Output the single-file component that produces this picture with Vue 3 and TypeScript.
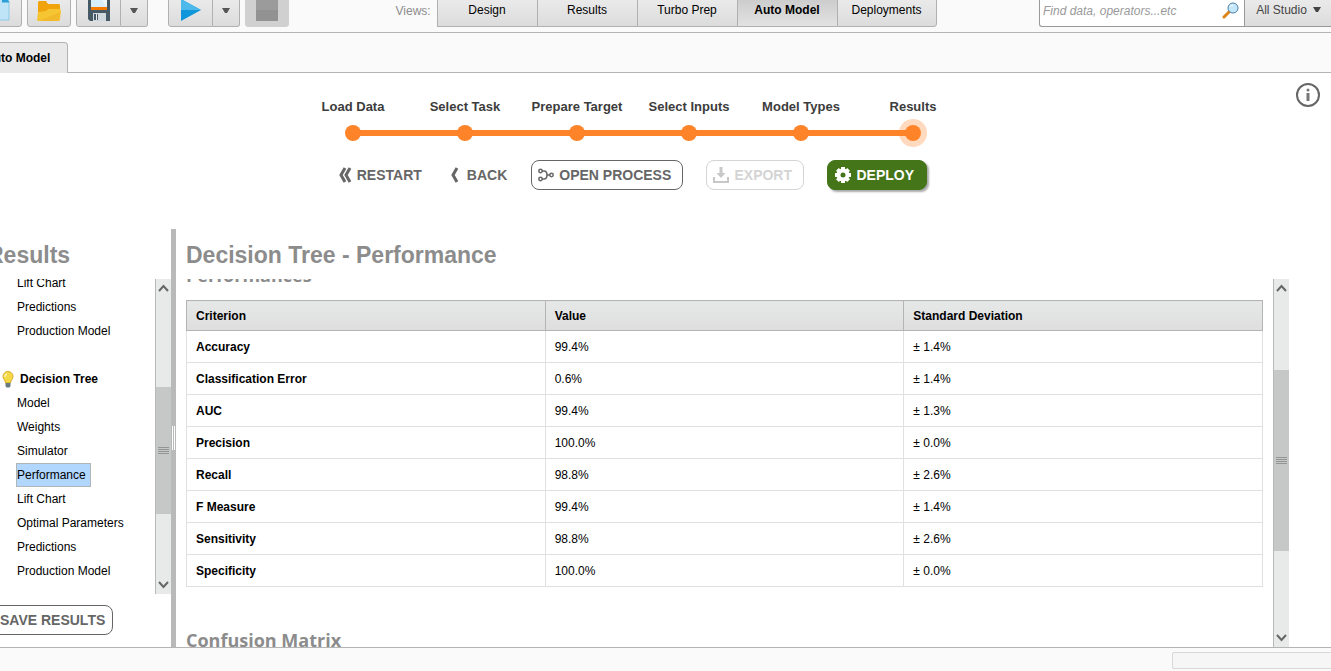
<script setup lang="ts">
import { ref } from 'vue'

interface Row {
  criterion: string
  value: string
  deviation: string
}

const views: string[] = ['Design', 'Results', 'Turbo Prep', 'Auto Model', 'Deployments']
const activeView = ref('Auto Model')

const steps: string[] = ['Load Data', 'Select Task', 'Prepare Target', 'Select Inputs', 'Model Types', 'Results']
const currentStep = 'Results'

const previousItems: string[] = ['Lift Chart', 'Predictions', 'Production Model']
const treeItems: string[] = [
  'Model',
  'Weights',
  'Simulator',
  'Performance',
  'Lift Chart',
  'Optimal Parameters',
  'Predictions',
  'Production Model',
]
const selectedItem = ref('Performance')
const query = ref('')

const rows: Row[] = [
  { criterion: 'Accuracy', value: '99.4%', deviation: '± 1.4%' },
  { criterion: 'Classification Error', value: '0.6%', deviation: '± 1.4%' },
  { criterion: 'AUC', value: '99.4%', deviation: '± 1.3%' },
  { criterion: 'Precision', value: '100.0%', deviation: '± 0.0%' },
  { criterion: 'Recall', value: '98.8%', deviation: '± 2.6%' },
  { criterion: 'F Measure', value: '99.4%', deviation: '± 1.4%' },
  { criterion: 'Sensitivity', value: '98.8%', deviation: '± 2.6%' },
  { criterion: 'Specificity', value: '100.0%', deviation: '± 0.0%' },
]
</script>

<template>
  <div class="app">
    <header class="toolbar">
      <div class="tools">
        <button class="tool" aria-label="New process">
          <svg width="20" height="34" viewBox="0 0 20 34">
            <path d="M0 5h12l7 9v19H0z" fill="#bfe4f7" stroke="#8ccbe8" />
            <path d="M12 5v10.500h7.500z" fill="#2a9fd8" />
          </svg>
        </button>
        <button class="tool" aria-label="Open process">
          <svg width="24" height="34" viewBox="0 0 24 34">
            <path d="M1 16V15l1-1h7l2 3h11l1 1v15H1z" fill="#f0a30a" />
            <path d="M0 33 1 25l8-1 2-2h12l1 1-1 10-1 1H1z" fill="#f6c532" />
            <path d="M2 34 23 25l-1 9z" fill="#f2b92a" />
          </svg>
        </button>
        <div class="split">
          <button class="tool" aria-label="Save process">
            <svg width="22" height="34" viewBox="0 0 22 34">
              <path d="M0 8h22v26H2l-2-2z" fill="#455a64" />
              <path d="M3 8h16v13H3z" fill="#d8effb" />
              <path d="M11 8h8v13z" fill="#eef8fd" />
              <path d="M3 20h16v3H3z" fill="#f57c00" />
              <path d="M5 26h13v8H5z" fill="#cfd8dc" />
              <path d="M6 27h4v6H6z" fill="#455a64" />
              <path d="M8 27h1v6H8z" fill="#eceff1" />
            </svg>
          </button>
          <button class="drop" aria-label="Save options">
            <svg width="8" height="6" viewBox="0 0 8 6"><path d="M0 0h8L5 5H3z" fill="#555" /></svg>
          </button>
        </div>
        <div class="split run">
          <button class="tool" aria-label="Run process">
            <svg width="20" height="34" viewBox="0 0 20 34">
              <path d="M0 12v22l20-11z" fill="#1296db" />
              <path d="M0 12v11h20z" fill="#4db8ea" />
            </svg>
          </button>
          <button class="drop" aria-label="Run options">
            <svg width="8" height="6" viewBox="0 0 8 6"><path d="M0 0h8L5 5H3z" fill="#555" /></svg>
          </button>
        </div>
        <button class="tool stop" aria-label="Stop process" disabled>
          <svg width="22" height="34" viewBox="0 0 22 34">
            <path d="M0 12h22v22H0z" fill="#929292" />
            <path d="M0 12h22v11H0z" fill="#9b9b9b" />
          </svg>
        </button>
      </div>

      <nav class="views" aria-label="Views">
        <span class="views-label">Views:</span>
        <button
          v-for="view in views"
          :key="view"
          class="view"
          :class="{ active: view === activeView }"
          @click="activeView = view"
        >
          {{ view }}
        </button>
      </nav>

      <div class="search">
        <label class="search-box">
          <input v-model="query" type="text" placeholder="Find data, operators...etc" aria-label="Search" />
          <svg width="18" height="18" viewBox="0 0 18 18">
            <path d="M2 16 8 10" stroke="#dd8418" stroke-width="3" stroke-linecap="round" />
            <circle cx="11" cy="7" r="5" fill="#c4e8fa" stroke="#4b7ea5" stroke-width="1" />
            <path d="M8 6a3 3 0 0 1 3-2" stroke="#fff" fill="none" />
          </svg>
        </label>
        <button class="scope">
          All Studio
          <svg width="8" height="6" viewBox="0 0 8 6"><path d="M0 0h8L5 5H3z" fill="#444" /></svg>
        </button>
      </div>
    </header>

    <div class="tabs">
      <button class="tab">Auto Model</button>
    </div>

    <section class="wizard">
      <div class="wizard-main">
        <ol class="steps">
          <li v-for="step in steps" :key="step" :class="{ current: step === currentStep }">
            <span>{{ step }}</span>
            <span class="track"><span class="dot"></span></span>
          </li>
        </ol>
        <div class="actions">
          <button class="plain restart">
            <svg width="13" height="16" viewBox="0 0 13 16">
              <path d="M6 1 2 8l4 7M11 1 7 8l4 7" fill="none" stroke="#666" stroke-width="3" />
            </svg>
            RESTART
          </button>
          <button class="plain back">
            <svg width="9" height="16" viewBox="0 0 9 16">
              <path d="M7 1 3 8l4 7" fill="none" stroke="#666" stroke-width="3" />
            </svg>
            BACK
          </button>
          <button class="boxed open">
            <svg width="16" height="14" viewBox="0 0 16 14" fill="none" stroke="#666">
              <circle cx="2.5" cy="3" r="1.7" stroke-width="1.5" />
              <circle cx="2.5" cy="11" r="1.7" stroke-width="1.5" />
              <circle cx="13.5" cy="7" r="1.7" stroke-width="1.5" />
              <path d="M4 3h2c2 0 3 2 3 4s-1 4-3 4H4M9 7h3" stroke-width="1.6" />
            </svg>
            OPEN PROCESS
          </button>
          <button class="boxed export" disabled>
            <svg width="16" height="16" viewBox="0 0 16 16">
              <path d="M6.500 0h3v6h3L8 11 3.500 6h3z" fill="#c8c8c8" />
              <path d="M1 10v5h14v-5" fill="none" stroke="#c8c8c8" stroke-width="2" />
            </svg>
            EXPORT
          </button>
          <button class="boxed deploy">
            <svg width="16" height="16" viewBox="0 0 16 16">
              <circle cx="8" cy="8" r="4.500" fill="none" stroke="#fff" stroke-width="4" />
              <g stroke="#fff" stroke-width="4">
                <path d="M8 0v3M8 13v3M0 8h3M13 8h3M2.400 2.400l2 2M11.600 11.600l2 2M2.400 13.600l2-2M11.600 4.400l2-2" />
              </g>
            </svg>
            DEPLOY
          </button>
        </div>
      </div>
      <div class="wizard-side">
        <button class="info" aria-label="Information">
          <svg width="24" height="24" viewBox="0 0 24 24">
            <circle cx="12" cy="12" r="11" fill="none" stroke="#666" stroke-width="2" />
            <circle cx="12" cy="7" r="1.500" fill="#777" />
            <path d="M12 10v8" stroke="#777" stroke-width="3" />
          </svg>
        </button>
      </div>
    </section>

    <main class="workspace">
      <aside class="sidebar">
        <h2 class="title">Results</h2>
        <div class="list-pane">
          <div class="list">
            <a v-for="item in previousItems" :key="item" href="#" class="item">{{ item }}</a>
            <div class="group">
              <svg width="12" height="17" viewBox="0 0 12 17">
                <path d="M1 5.500a5 5 0 0 1 10 0c0 3-2.500 3.500-2.500 6.500h-5C3.500 9 1 8.500 1 5.500z" fill="#f4d944" stroke="#d9a928" />
                <path d="M3.500 12h5v3l-1 1.500h-3l-1-1.500z" fill="#68797f" />
                <path d="M3 6a3 3 0 0 1 2-3" fill="none" stroke="#fff6b5" stroke-width="1.500" />
              </svg>
              Decision Tree
            </div>
            <a
              v-for="item in treeItems"
              :key="item"
              href="#"
              class="item"
              :class="{ selected: item === selectedItem }"
              @click.prevent="selectedItem = item"
            >{{ item }}</a>
          </div>
          <div class="scrollbar">
            <button aria-label="Scroll list up">
              <svg width="11" height="8" viewBox="0 0 11 8"><path d="m1 7 4.500-5L10 7" /></svg>
            </button>
            <div class="rail">
              <span class="space-list-top"></span>
              <span class="thumb thumb-list"></span>
              <span class="space-list-bottom"></span>
            </div>
            <button aria-label="Scroll list down">
              <svg width="11" height="8" viewBox="0 0 11 8"><path d="m1 1 4.500 5L10 1" /></svg>
            </button>
          </div>
        </div>
        <div class="save-row">
          <button class="boxed save">SAVE RESULTS</button>
        </div>
      </aside>

      <div class="divider"><span class="grip"></span></div>

      <section class="content">
        <h2 class="title">Decision Tree - Performance</h2>
        <div class="content-pane">
          <div class="report">
            <h3 class="first">Performances</h3>
            <table>
              <thead>
                <tr>
                  <th scope="col">Criterion</th>
                  <th scope="col">Value</th>
                  <th scope="col">Standard Deviation</th>
                </tr>
              </thead>
              <tbody>
                <tr v-for="row in rows" :key="row.criterion">
                  <th scope="row">{{ row.criterion }}</th>
                  <td>{{ row.value }}</td>
                  <td>{{ row.deviation }}</td>
                </tr>
              </tbody>
            </table>
            <h3>Confusion Matrix</h3>
          </div>
          <div class="scrollbar">
            <button aria-label="Scroll report up">
              <svg width="11" height="8" viewBox="0 0 11 8"><path d="m1 7 4.500-5L10 7" /></svg>
            </button>
            <div class="rail">
              <span class="space-report-top"></span>
              <span class="thumb thumb-report"></span>
              <span class="space-report-bottom"></span>
            </div>
            <button aria-label="Scroll report down">
              <svg width="11" height="8" viewBox="0 0 11 8"><path d="m1 1 4.500 5L10 1" /></svg>
            </button>
          </div>
        </div>
      </section>
    </main>

    <footer class="status"><div class="progress"></div></footer>
  </div>
</template>

<style>
body {
  margin: 0;
  background: #fff;
}
</style>

<style scoped>
.app {
  display: flex;
  flex-direction: column;
  height: 100vh;
  overflow: hidden;
  font-family: "Liberation Sans", Arial, sans-serif;
  font-size: 12px;
  color: #000;
}
.app * {
  box-sizing: border-box;
}
button,
input {
  font: inherit;
  color: inherit;
  margin: 0;
  padding: 0;
  border: 0;
  background: none;
}
svg {
  flex: none;
  display: block;
}

/* toolbar */
.toolbar {
  display: flex;
  flex: none;
  justify-content: space-between;
  align-items: flex-end;
  height: 33px;
  padding-bottom: 5px;
  overflow: hidden;
  background: #fafafa;
  border-bottom: 1px solid #b4b4b4;
}
.tools {
  display: flex;
  gap: 5px;
  margin-left: -22px;
}
.tool,
.drop {
  display: flex;
  align-items: flex-end;
  justify-content: center;
  width: 44px;
  height: 44px;
  padding-bottom: 5px;
  border: 1px solid #b0b0b0;
  border-radius: 3px;
  background: linear-gradient(#f2f2f2, #dcdcdc);
}
.split {
  display: flex;
}
.split .tool {
  width: 45px;
  border-radius: 3px 0 0 3px;
}
.drop {
  width: 27px;
  padding-bottom: 12px;
  border-left: 0;
  border-radius: 0 3px 3px 0;
}
.run {
  margin-left: 15px;
}
.tool.stop {
  border-color: #d0d0d0;
  background: #d0d0d0;
}
.views {
  display: flex;
  padding-left: 4px;
}
.views-label {
  align-self: flex-end;
  width: 41px;
  padding-bottom: 8px;
  line-height: 16px;
  color: #8c8c8c;
}
.view {
  width: 100px;
  height: 44px;
  padding-top: 9px;
  border: solid #b0b0b0;
  border-width: 1px 0 1px 1px;
  background: linear-gradient(#f2f2f2, #dcdcdc);
}
.view:last-child {
  border-right-width: 1px;
  border-bottom-right-radius: 3px;
}
.view.active {
  font-weight: bold;
  background: linear-gradient(#c0c0c0, #e2e2e2);
}
.search {
  display: flex;
  margin-right: -2px;
}
.search-box {
  display: flex;
  align-items: flex-end;
  width: 205px;
  height: 44px;
  padding: 0 4px 7px 3px;
  border: 1px solid #999;
  border-right: 0;
  border-radius: 3px 0 0 3px;
  background: #fff;
}
.search-box input {
  flex: 1;
  min-width: 0;
  height: 16px;
  font-style: italic;
  outline: none;
}
.search-box input::placeholder {
  color: #999;
  opacity: 1;
}
.scope {
  display: flex;
  gap: 6px;
  align-items: center;
  justify-content: center;
  width: 89px;
  height: 44px;
  padding-top: 9px;
  border: 1px solid #999;
  background: linear-gradient(#f2f2f2, #dcdcdc);
  color: #444;
}

/* document tabs */
.tabs {
  display: flex;
  flex: none;
  align-items: flex-end;
  height: 40px;
  background: #fafafa;
  border-bottom: 1px solid #b4b4b4;
}
.tab {
  height: 31px;
  margin: 0 0 -1px -26px;
  padding: 0 17px 0 10px;
  border: 1px solid #b4b4b4;
  border-bottom: 0;
  border-radius: 4px 4px 0 0;
  background: #e9e9e9;
  font-weight: bold;
}

/* wizard header */
.wizard {
  display: flex;
  flex: none;
  height: 156px;
}
.wizard-main {
  display: flex;
  flex: 1;
  flex-direction: column;
  align-items: center;
  padding-top: 26px;
}
.wizard-side {
  display: flex;
  justify-content: flex-end;
  align-items: flex-start;
  width: 65px;
  padding: 10px 11px 0 0;
}
.steps {
  display: flex;
  margin: 0;
  padding: 0;
  list-style: none;
  font-size: 13px;
  font-weight: bold;
  line-height: 16px;
  color: #3c3c3c;
}
.steps li {
  width: 112px;
  text-align: center;
}
.track {
  display: flex;
  justify-content: center;
  align-items: center;
  height: 28px;
  margin-top: 4px;
  background: linear-gradient(#ff8329, #ff8329) center / 100% 6px no-repeat;
}
.steps li:first-child .track {
  background-size: 50% 6px;
  background-position: right center;
}
.steps li:last-child .track {
  background-size: 50% 6px;
  background-position: left center;
}
.dot {
  width: 16px;
  height: 16px;
  border-radius: 50%;
  background: #ff8329;
}
.current .dot {
  box-shadow: 0 0 0 6px rgba(255, 131, 41, 0.3);
}
.actions {
  display: flex;
  align-items: center;
  margin-top: 13px;
  font-size: 14px;
  font-weight: bold;
  color: #666;
}
.plain,
.boxed {
  display: flex;
  align-items: center;
  height: 30px;
  gap: 5px;
  white-space: nowrap;
}
.boxed {
  justify-content: center;
  border: 1px solid #666;
  border-radius: 8px;
}
.restart {
  margin-right: 28px;
}
.back {
  gap: 8px;
  margin-right: 24px;
}
.open {
  width: 152px;
  margin-right: 23px;
  padding-right: 5px;
}
.export {
  width: 98px;
  margin-right: 23px;
  padding-right: 5px;
  border-color: #d4d4d4;
  color: #d4d4d4;
}
.deploy {
  width: 100px;
  padding-right: 5px;
  border-color: #447518;
  background: #447518;
  color: #fff;
  box-shadow: 2px 2px 2px #aaa;
}

/* workspace */
.workspace {
  display: flex;
  flex: 1;
  min-height: 0;
}
.sidebar {
  display: flex;
  flex: none;
  flex-direction: column;
  width: 171px;
}
.title {
  flex: none;
  height: 50px;
  margin: 0;
  line-height: 52px;
  font-size: 23px;
  color: #8c8c8c;
  white-space: nowrap;
}
.sidebar .title {
  margin-left: -13px;
}
.list-pane {
  display: flex;
  flex: 1;
  min-height: 0;
}
.list {
  display: flex;
  flex: 1;
  flex-direction: column;
  align-items: flex-start;
  justify-content: flex-end;
  padding: 0 0 11px 2px;
  overflow: hidden;
}
.item {
  flex: none;
  height: 24px;
  margin-left: 14px;
  padding: 0 4px 0 0;
  border: 1px solid transparent;
  line-height: 22px;
  color: #000;
  text-decoration: none;
}
.item.selected {
  background: #b1d7ff;
  border-color: #b0b5b8;
}
.group {
  display: flex;
  flex: none;
  gap: 6px;
  align-items: center;
  height: 24px;
  margin-top: 24px;
  font-weight: bold;
}
.scrollbar {
  display: flex;
  flex: none;
  flex-direction: column;
  width: 16px;
  border-left: 1px solid #b8b8b8;
  background: #e8eaea;
}
.scrollbar button {
  display: flex;
  align-items: center;
  justify-content: center;
  height: 18px;
}
.scrollbar path {
  fill: none;
  stroke: #666;
  stroke-width: 2;
}
.rail {
  display: flex;
  flex: 1;
  flex-direction: column;
}
.thumb {
  display: flex;
  align-items: center;
  justify-content: center;
  background: #c6c8c7;
}
.thumb::before {
  content: "";
  width: 11px;
  height: 7px;
  background: repeating-linear-gradient(#929594 0 1px, transparent 1px 2px);
}
.space-list-top {
  flex: 90;
}
.thumb-list {
  flex: 127;
}
.space-list-bottom {
  flex: 62;
}
.space-report-top {
  flex: 73;
}
.thumb-report {
  flex: 181;
}
.space-report-bottom {
  flex: 78;
}
.save-row {
  display: flex;
  flex: none;
  align-items: flex-start;
  height: 53px;
  padding-top: 11px;
}
.save {
  margin-left: -10px;
  padding: 0 7px 0 9px;
  font-size: 14px;
  font-weight: bold;
  color: #666;
}
.divider {
  display: flex;
  flex: none;
  align-items: center;
  justify-content: center;
  width: 5px;
  background: #b9b9b9;
}
.grip {
  width: 3px;
  height: 24px;
  border: solid #fff;
  border-width: 0 1px;
}

/* report */
.content {
  display: flex;
  flex: 1;
  flex-direction: column;
  min-width: 0;
  padding: 0 42px 0 10px;
}
.content-pane {
  display: flex;
  flex: 1;
  gap: 10px;
  min-height: 0;
}
.report {
  flex: 1;
  min-width: 0;
  overflow: hidden;
}
h3 {
  margin: 39px 0 0;
  font-family: "Open Sans", sans-serif;
  font-size: 18px;
  font-weight: bold;
  line-height: 28px;
  color: #8c8c8c;
}
h3.first {
  margin: -18px 0 11px;
}
table {
  width: 100%;
  table-layout: fixed;
  border-collapse: collapse;
}
th,
td {
  height: 32px;
  padding: 0 9px;
  border: 1px solid #e0e0e0;
  text-align: left;
}
thead th {
  height: 30px;
  border-color: #b4b4b4;
  background: linear-gradient(#e6e8e8, #dedede);
}

/* status bar */
.status {
  display: flex;
  flex: none;
  align-items: flex-start;
  justify-content: flex-end;
  height: 24px;
  padding-top: 4px;
  border-top: 1px solid #b4b4b4;
  background: #fafafa;
}
.progress {
  width: 162px;
  height: 17px;
  margin-right: -3px;
  border: 1px solid #d8d8d8;
  border-radius: 2px;
  background: #f6f6f6;
}
</style>
